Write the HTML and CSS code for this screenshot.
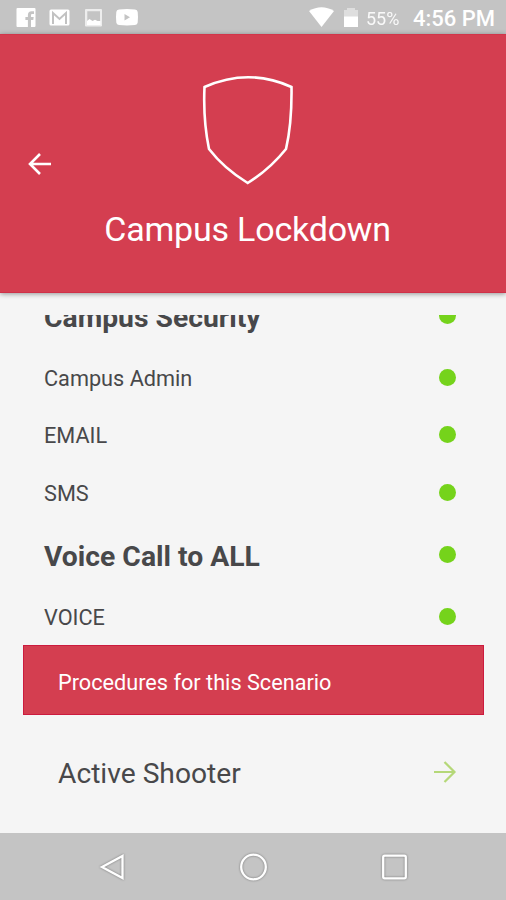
FILE: index.html
```html
<!DOCTYPE html>
<html lang="en">
<head>
<meta charset="utf-8">
<title>Campus Lockdown</title>
<link rel="stylesheet" href="styles.css">
</head>
<body>
<div class="screen">
  <div class="status">
    <svg class="status-icons" width="140" height="34" viewBox="0 0 140 34" fill="#fff">
      <path fill-rule="evenodd" d="M17.500 8h17a1 1 0 0 1 1 1v17a1 1 0 0 1-1 1H31v-7h2.300l.4-3H31v-1.600c0-1 .5-1.400 1.400-1.400H34v-2.700h-2.400c-2.500 0-3.700 1.500-3.700 3.700v2h-2.500v3h2.500v7H17.500a1 1 0 0 1-1-1V9a1 1 0 0 1 1-1z"/>
      <rect x="49.500" y="9.500" width="20" height="16" rx="1.500"/>
      <path d="M53 24V13l6.500 6 6.500-6v11" fill="none" stroke="#c2c2c2" stroke-width="2"/>
      <path opacity=".7" fill-rule="evenodd" d="M86 9h15a1 1 0 0 1 1 1v15.500a1 1 0 0 1-1 1H86a1 1 0 0 1-1-1V10a1 1 0 0 1 1-1zm1.300 2.300V25h12.700V11.300z"/>
      <path d="M87 21l2.500-2 3 2 2.500-1.300 2.500 1.300H100.500V25H87z"/>
      <path fill-rule="evenodd" d="M119 9.500q8-.8 16 0 2.500.3 2.700 2.500.6 5 0 10.500-.2 2.200-2.700 2.500-8 .8-16 0-2.500-.3-2.700-2.500-.6-5.500 0-10.500.2-2.200 2.700-2.500zm5.500 4.500v6.500l5.500-3.250z"/>
    </svg>
    <svg class="signal" width="52" height="34" viewBox="0 0 52 34" fill="#fff">
      <path d="M3 11Q15.500 3.500 28 11L15.500 27z"/>
      <path opacity=".45" d="M38 10h3V8h8v2h3v7H38z"/>
      <path d="M38 16.500h14V27H38z"/>
    </svg>
    <span class="battery">55%</span>
    <span class="clock">4:56 PM</span>
  </div>
  <header class="header">
    <svg class="back" width="24" height="24" viewBox="0 0 24 24"><path d="M23 12H2M12 2L2 12l10 10"/></svg>
    <div class="brand">
      <svg width="96" height="114" viewBox="0 0 96 114"><path d="M4.500 14Q48.500 -5.500 91.500 14Q92 50.500 86 76Q69.500 96.500 47.700 110Q24 95.500 9 76Q3 46.500 4.500 14Z"/></svg>
      <h1 class="title">Campus Lockdown</h1>
    </div>
  </header>
  <main class="content">
    <div class="list">
      <div class="row group"><span>Campus Security</span><i class="dot"></i></div>
      <div class="row"><span>Campus Admin</span><i class="dot"></i></div>
      <div class="row"><span>EMAIL</span><i class="dot"></i></div>
      <div class="row"><span>SMS</span><i class="dot"></i></div>
      <div class="row group"><span>Voice Call to ALL</span><i class="dot"></i></div>
      <div class="row"><span>VOICE</span><i class="dot"></i></div>
    </div>
    <div class="banner"><span>Procedures for this Scenario</span></div>
    <div class="procedure">
      <span>Active Shooter</span>
      <svg width="24" height="24" viewBox="0 0 24 24"><path d="M1 12h20M11.500 2L21.500 12l-10 10"/></svg>
    </div>
  </main>
  <nav class="nav">
    <svg width="28" height="30" viewBox="0 0 28 30"><path d="M4 15L24.500 4v22z"/></svg>
    <svg width="30" height="30" viewBox="0 0 30 30"><circle cx="15.500" cy="15" r="12.300"/></svg>
    <svg width="30" height="30" viewBox="0 0 30 30"><rect x="4.200" y="3.700" width="22.600" height="22.600" rx="1.500"/></svg>
  </nav>
</div>
</body>
</html>
```
FILE: styles.css
```css
* { box-sizing: border-box; }
body {
  margin: 0;
  font-family: Roboto, "Liberation Sans", sans-serif;
  color: #48484a;
}
.screen {
  width: 506px;
  height: 900px;
  display: flex;
  flex-direction: column;
  background: #f5f5f5;
  overflow: hidden;
}
.status {
  height: 34px;
  flex: none;
  display: flex;
  align-items: center;
  background: #c4c4c4;
  color: #fff;
  padding-right: 11px;
}
.signal { margin-left: auto; margin-right: 8px; }
.signal, .status-icons { flex: none; }
.battery { width: 34px; font-size: 18px; opacity: .9; margin-right: 13px; padding-top: 2px; }
.clock { width: 82px; font-size: 22px; font-weight: 500; white-space: nowrap; padding-top: 2px; }
.header {
  height: 259px;
  flex: none;
  display: grid;
  grid-template-columns: 24px 1fr;
  padding-left: 28px;
  background: #d43e50;
  border-top: 1px solid #d2354a;
  border-bottom: 1px solid #cf3048;
  box-shadow: 0 1px 5px rgba(0, 0, 0, .4);
}
.back { margin-top: 117px; }
.back path { fill: none; stroke: #fff; stroke-width: 2.600; }
.brand {
  display: flex;
  flex-direction: column;
  align-items: center;
  padding: 38px 63px 0 0;
}
.brand path { fill: none; stroke: #fff; stroke-width: 2.600; stroke-linejoin: miter; }
.title {
  margin: 22px 0 0;
  color: #fff;
  font-size: 34px;
  line-height: 40px;
  font-weight: 400;
  letter-spacing: -.2px;
  white-space: nowrap;
}
.content { flex: 1; padding-top: 22px; }
.list {
  height: 330px;
  display: flex;
  flex-direction: column;
  justify-content: flex-end;
  overflow: hidden;
}
.row {
  height: 57.500px;
  flex: none;
  display: flex;
  align-items: center;
  justify-content: space-between;
  padding: 0 50px 0 44px;
  font-size: 21.700px;
}
.row span { padding-top: 2px; }
.group { height: 66.500px; font-size: 28.300px; font-weight: 700; }
.group span { padding-top: 4px; }
.dot { width: 17px; height: 17px; border-radius: 50%; background: #75d31b; }
.banner {
  height: 70px;
  margin: 0 22px 0 23px;
  padding: 4px 34px 0;
  display: flex;
  align-items: center;
  background: #d43e50;
  border: 1px solid #cc1b3e;
  color: #fff;
  font-size: 21.700px;
}
.procedure {
  height: 114px;
  padding: 0 49px 0 58px;
  display: flex;
  align-items: center;
  justify-content: space-between;
  font-size: 28.200px;
}
.procedure span { padding-top: 2px; }
.procedure path { fill: none; stroke: #b5d878; stroke-width: 2.200; }
.nav {
  height: 67px;
  flex: none;
  display: flex;
  align-items: center;
  justify-content: space-between;
  background: #c4c4c4;
  padding: 0 97px 0 98px;
}
.nav svg { filter: drop-shadow(0 0 1px rgba(0, 0, 0, .4)); }
.nav svg * { fill: none; stroke: #fff; stroke-width: 2.300; }
```
